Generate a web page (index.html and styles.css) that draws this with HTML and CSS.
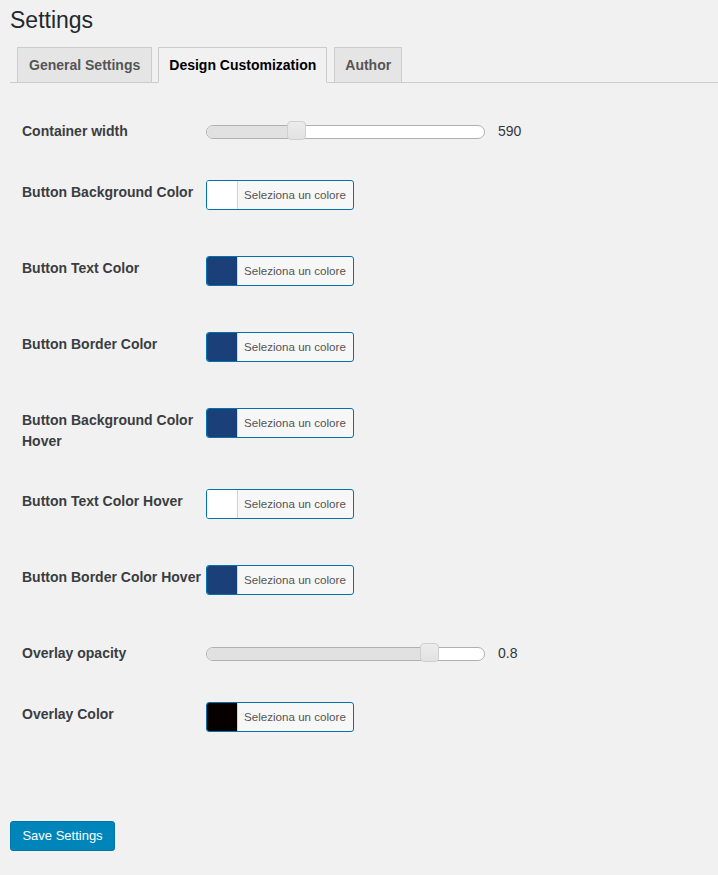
FILE: index.html
```html
<!DOCTYPE html>
<html>
<head>
<meta charset="utf-8">
<title>Settings</title>
<link rel="stylesheet" href="styles.css">
</head>
<body>
<div class="wrap">
  <h1 class="title">Settings</h1>
  <nav class="tabs">
    <a class="tab">General Settings</a>
    <a class="tab active">Design Customization</a>
    <a class="tab tab-short">Author</a>
  </nav>
  <div class="form">
    <div class="row row-slider">
      <div class="label">Container width</div>
      <div class="control">
        <div class="slider">
          <div class="track"><div class="fill" style="width: 90px"></div></div>
          <div class="thumb" style="left: 81px"></div>
        </div>
        <span class="value">590</span>
      </div>
    </div>
    <div class="row row-color">
      <div class="label">Button Background Color</div>
      <div class="control"><button class="picker"><span class="swatch swatch-white"></span><span class="picker-text">Seleziona un colore</span></button></div>
    </div>
    <div class="row row-color">
      <div class="label">Button Text Color</div>
      <div class="control"><button class="picker"><span class="swatch swatch-blue"></span><span class="picker-text">Seleziona un colore</span></button></div>
    </div>
    <div class="row row-color">
      <div class="label">Button Border Color</div>
      <div class="control"><button class="picker"><span class="swatch swatch-blue"></span><span class="picker-text">Seleziona un colore</span></button></div>
    </div>
    <div class="row row-color row-tall">
      <div class="label">Button Background Color Hover</div>
      <div class="control"><button class="picker"><span class="swatch swatch-blue"></span><span class="picker-text">Seleziona un colore</span></button></div>
    </div>
    <div class="row row-color">
      <div class="label">Button Text Color Hover</div>
      <div class="control"><button class="picker"><span class="swatch swatch-white"></span><span class="picker-text">Seleziona un colore</span></button></div>
    </div>
    <div class="row row-color">
      <div class="label">Button Border Color Hover</div>
      <div class="control"><button class="picker"><span class="swatch swatch-blue"></span><span class="picker-text">Seleziona un colore</span></button></div>
    </div>
    <div class="row row-slider">
      <div class="label">Overlay opacity</div>
      <div class="control">
        <div class="slider">
          <div class="track"><div class="fill" style="width: 223px"></div></div>
          <div class="thumb" style="left: 214px"></div>
        </div>
        <span class="value">0.8</span>
      </div>
    </div>
    <div class="row row-color">
      <div class="label">Overlay Color</div>
      <div class="control"><button class="picker"><span class="swatch swatch-black"></span><span class="picker-text">Seleziona un colore</span></button></div>
    </div>
  </div>
  <button class="save">Save Settings</button>
</div>
</body>
</html>
```

FILE: styles.css
```css
html, body {
  margin: 0;
  padding: 0;
  background: #f1f1f1;
}

body {
  font-family: "Liberation Sans", Arial, sans-serif;
  color: #23282d;
  height: 875px;
  overflow: hidden;
}

.wrap {
  padding-left: 10px;
}

.title {
  margin: 0;
  padding-top: 5px;
  font-size: 23px;
  line-height: 30px;
  font-weight: 400;
  color: #23282d;
}

.tabs {
  display: flex;
  align-items: flex-start;
  margin-top: 12px;
  height: 35px;
  border-bottom: 1px solid #ccc;
}

.tab {
  display: block;
  margin-left: 6px;
  margin-bottom: -1px;
  padding: 5px 11px 5px 11px;
  font-size: 14px;
  line-height: 24px;
  font-weight: 700;
  color: #555;
  background: #e5e5e5;
  border: 1px solid #ccc;
}

.tab:first-child {
  margin-left: 7px;
}

.tab.active {
  padding: 5px 10px;
  background: #f1f1f1;
  color: #000;
  border-bottom-color: #f1f1f1;
}

.tab-short {
  margin-left: 7px;
  padding: 5px 10px;
}

.form {
  margin-top: 36px;
  padding-left: 12px;
}

.row {
  display: flex;
  align-items: flex-start;
}

.label {
  width: 184px;
  flex: none;
  font-size: 14px;
  font-weight: 700;
  line-height: 21px;
  color: #3a3d41;
}

.row-color {
  height: 76px;
}

.row-color .label {
  padding-top: 2px;
}

.row-tall {
  height: 81px;
}

.row-slider {
  height: 61px;
}

.row-slider .label {
  padding-top: 2px;
}

.control {
  display: flex;
  align-items: center;
}

.slider {
  position: relative;
  width: 279px;
  height: 21px;
}

.track {
  position: absolute;
  left: 0;
  top: 5px;
  width: 277px;
  height: 12px;
  border: 1px solid #b0b0b0;
  border-radius: 7px;
  background: #fff;
  overflow: hidden;
}

.fill {
  height: 100%;
  background: #e1e1e1;
}

.thumb {
  position: absolute;
  top: 1px;
  width: 17px;
  height: 17px;
  border: 1px solid #cfcfcf;
  border-radius: 4px;
  background: linear-gradient(#ececec, #e2e2e2);
}

.value {
  margin-left: 13px;
  padding-top: 2px;
  font-size: 14px;
  color: #32373c;
  line-height: 21px;
}

.picker {
  display: flex;
  align-items: stretch;
  width: 148px;
  height: 30px;
  padding: 0;
  margin: 0;
  border: 1px solid #0073aa;
  border-radius: 3px;
  background: #f7f7f7;
  overflow: hidden;
  font-family: inherit;
  cursor: pointer;
}

.swatch {
  display: block;
  width: 30px;
  flex: none;
  border-right: 1px solid #d4d4d4;
}

.swatch-white {
  background: #fff;
}

.swatch-blue {
  background: #1b4079;
}

.swatch-black {
  background: #070000;
}

.picker-text {
  display: block;
  padding-left: 6px;
  font-size: 11.6px;
  line-height: 28px;
  color: #555;
  white-space: nowrap;
}

.save {
  display: block;
  margin-top: 43px;
  height: 30px;
  width: 105px;
  padding: 0;
  font-family: inherit;
  font-size: 13px;
  line-height: 28px;
  color: #fff;
  background: #0085ba;
  border: 1px solid #0073aa;
  border-radius: 3px;
  cursor: pointer;
}
```
